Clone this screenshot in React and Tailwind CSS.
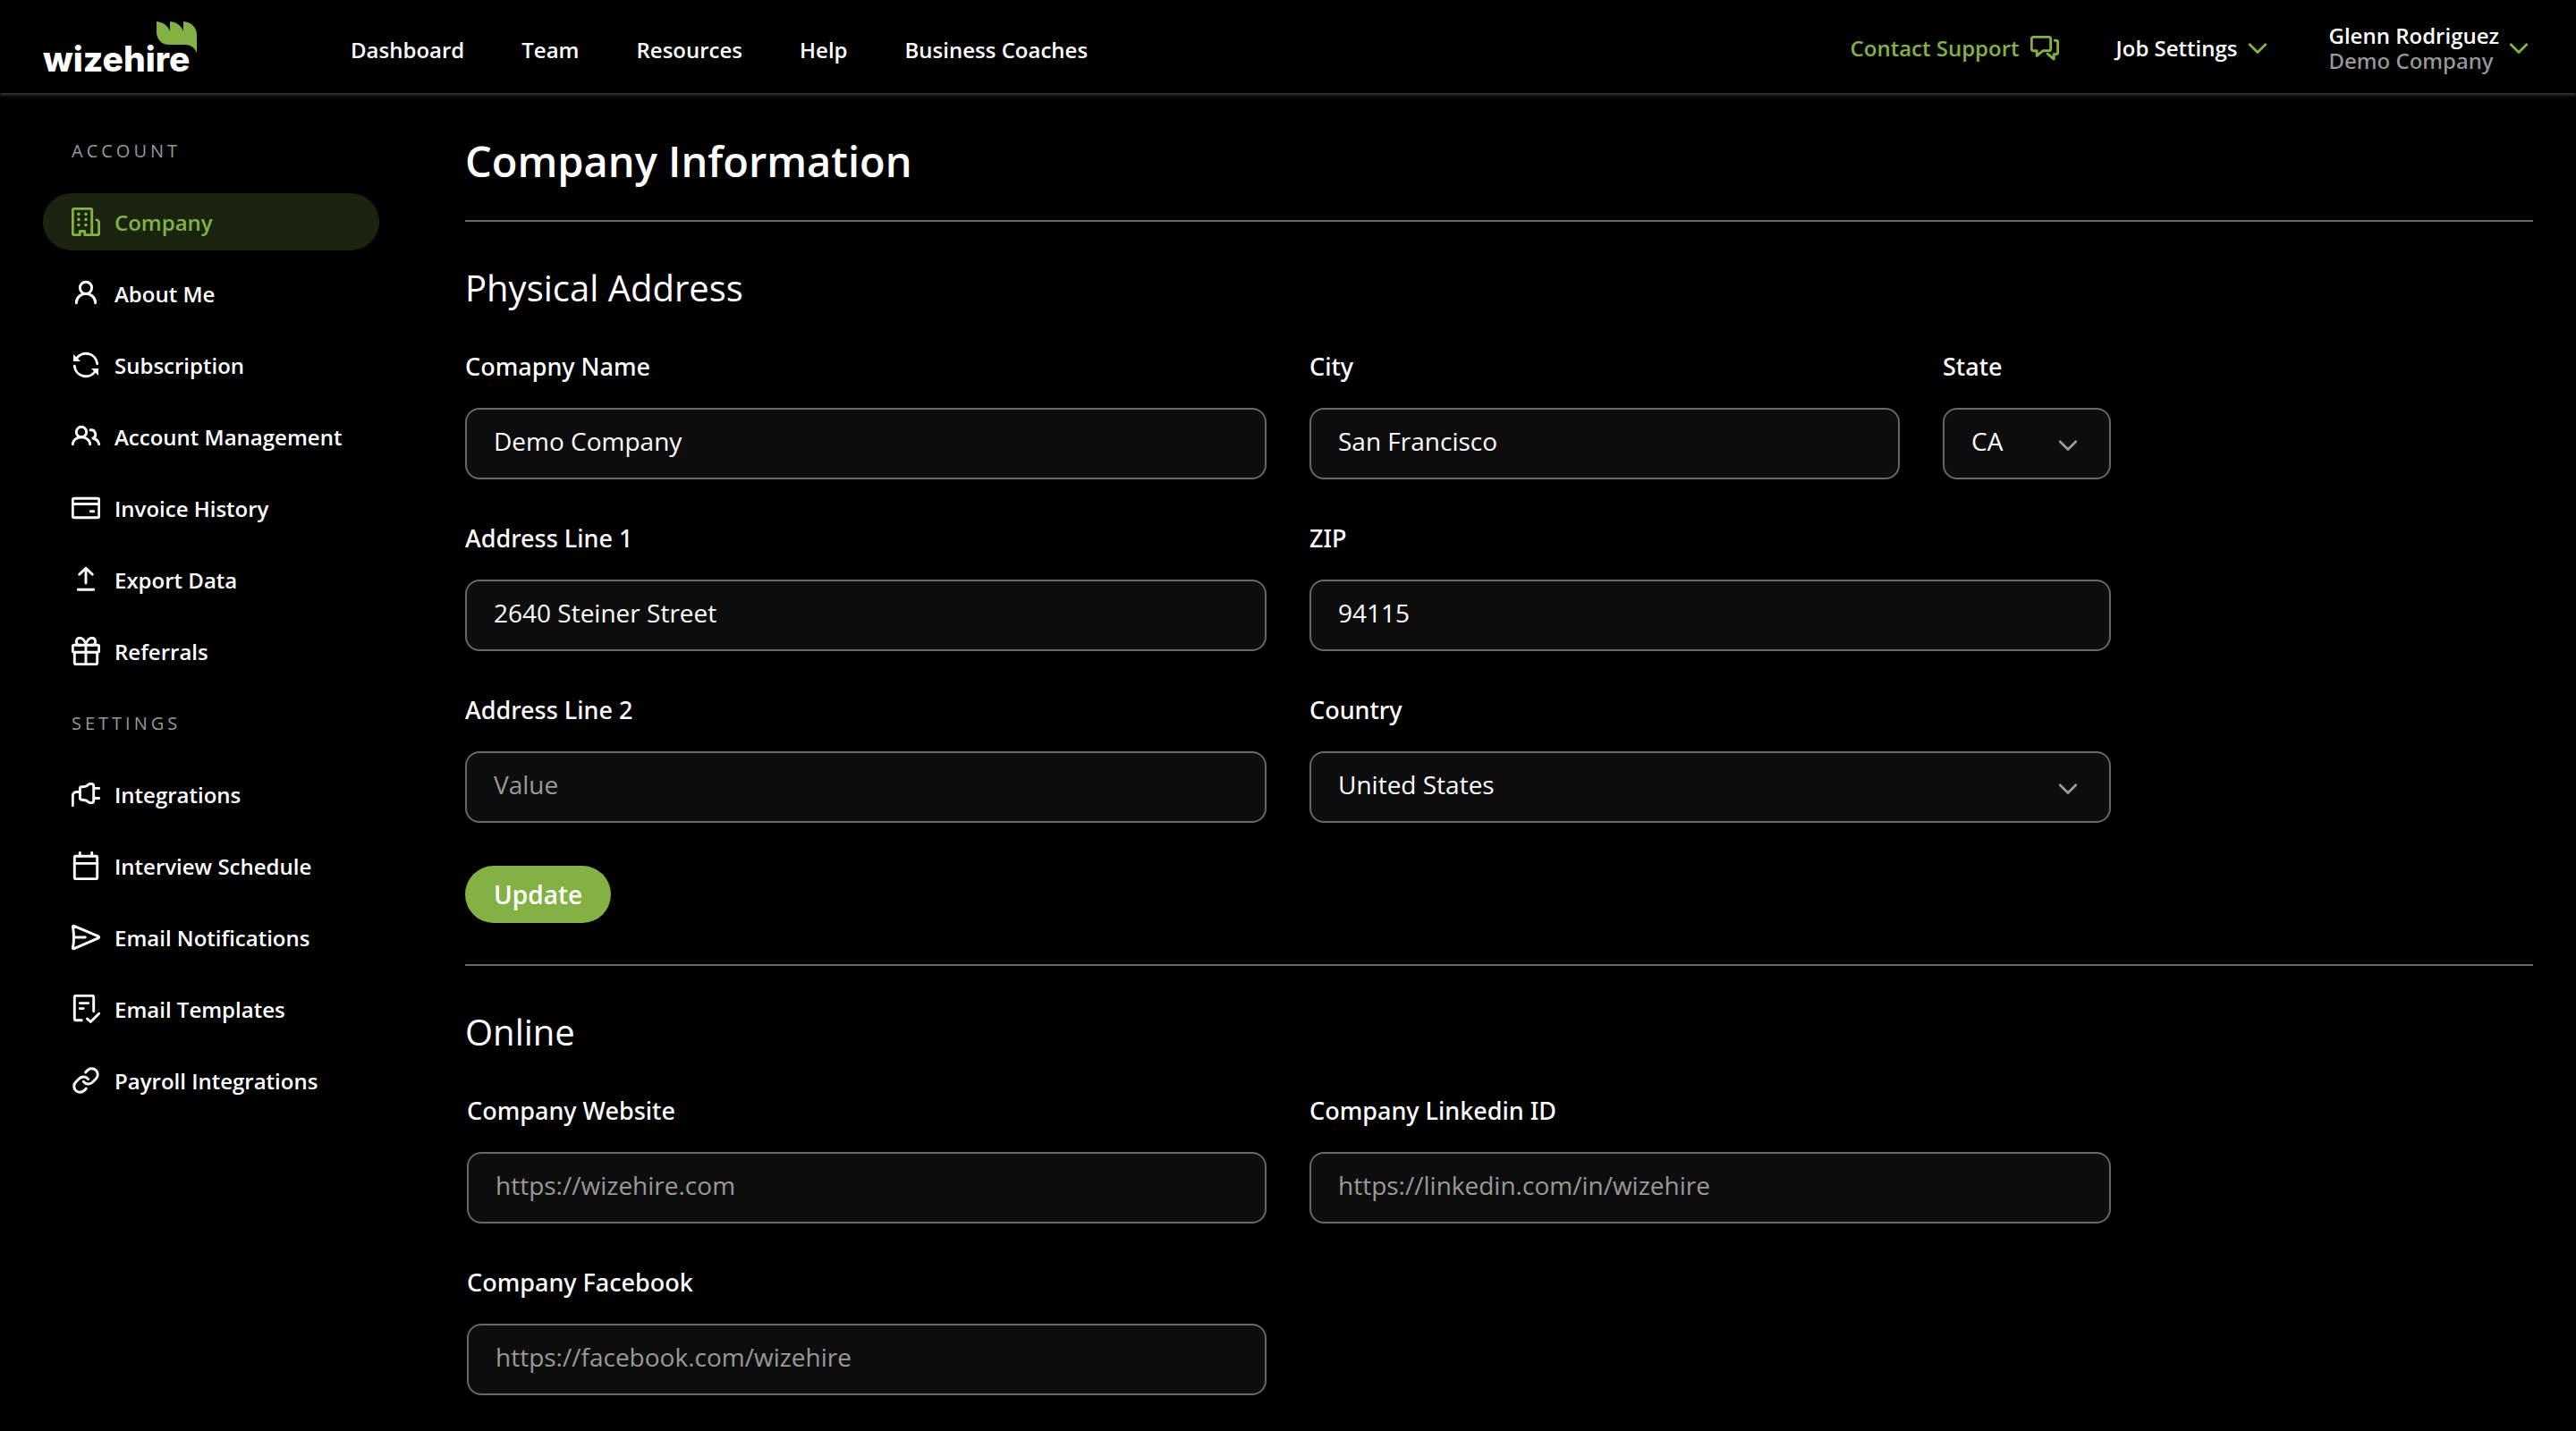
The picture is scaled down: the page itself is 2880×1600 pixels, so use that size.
import { useState } from "react";
import { Link } from "lucide-react";

function Icon({ children, className = "" }) {
  return (
    <svg
      viewBox="0 0 32 32"
      fill="none"
      stroke="currentColor"
      strokeWidth="2.9"
      strokeLinecap="round"
      strokeLinejoin="round"
      aria-hidden="true"
      className={`size-8 shrink-0 ${className}`}
    >
      {children}
    </svg>
  );
}

const BuildingIcon = () => (
  <Icon>
    <path d="M9.3 30.6H2.7a1.4 1.4 0 0 1-1.4-1.4V2.8a1.4 1.4 0 0 1 1.4-1.4h18.6a1.4 1.4 0 0 1 1.4 1.4v27.8h-8v-4.1H9.3z" />
    <path d="M22.7 30.6h6.6a1.4 1.4 0 0 0 1.4-1.4V17.2a3.4 3.4 0 0 0-2.8-3.3" />
    <g fill="currentColor" stroke="none">
      <circle cx="7.9" cy="7.4" r="1.8" />
      <circle cx="16" cy="7.4" r="1.8" />
      <circle cx="7.9" cy="13.4" r="1.8" />
      <circle cx="16" cy="13.4" r="1.8" />
      <circle cx="7.9" cy="19.5" r="1.8" />
      <circle cx="16" cy="19.5" r="1.8" />
    </g>
  </Icon>
);

const UserIcon = () => (
  <Icon>
    <circle cx="16" cy="9.8" r="6.6" />
    <path d="M5.3 26.7a10.7 10.3 0 0 1 21.4 0" />
  </Icon>
);

const SyncIcon = () => (
  <Icon>
    <path d="M28.7 14.7A12.7 12.7 0 0 0 5.6 8.8" />
    <path d="M3.3 17.3a12.7 12.7 0 0 0 23.1 5.9" />
    <path d="M2 4v8h8zM30 28v-8h-8z" fill="currentColor" stroke="none" />
  </Icon>
);

const UsersIcon = () => (
  <Icon>
    <circle cx="11" cy="11" r="5.7" />
    <path d="M1.3 24.7a9.7 8 0 0 1 19.4 0" />
    <path d="M21 8.8a4.9 4.9 0 0 1 3 9.2q5.6 1.4 6.7 6.7" />
  </Icon>
);

const CardIcon = () => (
  <Icon>
    <rect x="1.3" y="5.3" width="29.4" height="21.4" rx="1.5" />
    <path d="M1.3 11.5h29.4M21.3 19.7h3.4" />
  </Icon>
);

const ExportIcon = () => (
  <Icon>
    <path d="M16 20V3.5M8.7 10.3L16 3.3l7.3 7M7.3 27.3h17.4" />
  </Icon>
);

const GiftIcon = () => (
  <Icon>
    <rect x="1.3" y="9.3" width="29.4" height="8" rx="1.4" />
    <path d="M3.3 17.3v12a1.4 1.4 0 0 0 1.4 1.4h22.6a1.4 1.4 0 0 0 1.4-1.4v-12M16 9.3v21.4" />
    <path d="M16 9.3c-.8-4.5-3.4-8-6.7-8-5.3 0-5.3 8 0 8M16 9.3c.8-4.5 3.4-8 6.7-8 5.3 0 5.3 8 0 8" />
  </Icon>
);

const PlugIcon = () => (
  <Icon>
    <path d="M1.3 28.7V17.5a4 4 0 0 1 4-4h3.4" />
    <path d="M9.4 9.7q0-1.7 1.7-1.9c3.6-.3 5.3-.4 6.5-1.6l1-.9q1-.9 2.4-.9h1.300q2.400 0 2.400 2.300v16.600q0 2.300-2.400 2.300H21q-1.400 0-2.400-.9l-1-.9c-1.200-1.200-2.900-1.300-6.500-1.600q-1.700-.2-1.700-1.900z" />
    <path d="M25.3 9.4h5.4M25.3 20.5h5.4" />
  </Icon>
);

const CalendarIcon = () => (
  <Icon>
    <rect x="3.3" y="5.3" width="25.4" height="25.4" rx="1.4" />
    <path d="M3.3 13.4h25.4M9.3 1.3v4M22.7 1.3v4" />
  </Icon>
);

const SendIcon = () => (
  <Icon>
    <path d="M1.5 4.4q-.2-1.5 1.3-1L30 14.9q1.4.9 0 1.9L2.8 28.6q-1.5.5-1.3-1 2-11.600 0-23.200zM3.300 16h12" />
  </Icon>
);

const TemplateIcon = () => (
  <Icon>
    <path d="M11.3 28.7H4.7a1.4 1.4 0 0 1-1.4-1.4V2.7a1.4 1.4 0 0 1 1.4-1.4h18.6a1.4 1.4 0 0 1 1.4 1.4v16" />
    <path d="M9.3 9.6h9.4M9.3 15.6h4M17.5 27l3.8 3.5 9.4-9.3" />
  </Icon>
);

const LinkIcon = () => <Link className="size-8 shrink-0" strokeWidth={2.2} aria-hidden="true" />;

const ChatIcon = () => (
  <Icon>
    <path d="M3.3 3.4h17.4a2 2 0 0 1 2 2v11.3a2 2 0 0 1-2 2h-6.5l-7 5.7v-5.7H3.3a2 2 0 0 1-2-2V5.4a2 2 0 0 1 2-2z" />
    <path d="M27.3 7.3h1.4a2 2 0 0 1 2 2v11.3a2 2 0 0 1-2 2h-2.4V28l-7-5.6" />
  </Icon>
);

const ChevronIcon = ({ className }) => (
  <Icon className={className}>
    <path d="M7.2 11.7L16 20.5l8.800-8.800" />
  </Icon>
);

function Logo() {
  return (
    <a href="#home" aria-label="wizehire" className="relative flex h-full w-44 shrink-0 items-center">
      <span className="pt-6 font-['Inter'] text-[39px] leading-[48px] font-extrabold text-white">wizehire</span>
      <svg viewBox="0 0 45 36" aria-hidden="true" className="absolute top-5 left-[127px] h-9 w-[45px]">
        <path
          d="M0 0c8 .5 13 5.500 15 11V0c8 .5 13 5.500 15 11V0c9 .5 15 7 15 15v20.500C43 29.500 38.500 26 32 26H14C6 26 0 20 0 12z"
          fill="#84b144"
        />
      </svg>
    </a>
  );
}

const NAV = ["Dashboard", "Team", "Resources", "Help", "Business Coaches"];

const ACCOUNT = [
  ["Company", BuildingIcon],
  ["About Me", UserIcon],
  ["Subscription", SyncIcon],
  ["Account Management", UsersIcon],
  ["Invoice History", CardIcon],
  ["Export Data", ExportIcon],
  ["Referrals", GiftIcon],
];

const SETTINGS = [
  ["Integrations", PlugIcon],
  ["Interview Schedule", CalendarIcon],
  ["Email Notifications", SendIcon],
  ["Email Templates", TemplateIcon],
  ["Payroll Integrations", LinkIcon],
];

function Header() {
  return (
    <header className="flex h-[104px] items-center bg-black px-12 pt-1 text-[24px] leading-7 font-semibold shadow-[0_2px_4px_rgba(255,255,255,0.25)]">
      <Logo />
      <nav aria-label="Main" className="ml-[168px] flex gap-16 pt-1">
        {NAV.map((label) => (
          <a key={label} href="#nav">{label}</a>
        ))}
      </nav>
      <div className="ml-auto flex items-center gap-16">
        <a href="#support" className="flex items-center gap-3 text-[#84b144]">
          Contact Support
          <ChatIcon />
        </a>
        <button type="button" className="flex items-center gap-1.5">
          Job Settings
          <ChevronIcon className="text-[#84b144]" />
        </button>
        <button type="button" className="flex items-center gap-1.5 text-left">
          <span className="flex flex-col">
            <span>Glenn Rodriguez</span>
            <span className="font-['Noto_Sans'] font-medium text-[#999999]">Demo Company</span>
          </span>
          <ChevronIcon className="text-[#84b144]" />
        </button>
      </div>
    </header>
  );
}

function MenuGroup({ title, items, active, onSelect }) {
  return (
    <>
      <h2 className="flex h-16 items-center px-8 pt-0.5 text-[20px] leading-7 tracking-[4px] text-[#999999] uppercase">{title}</h2>
      {items.map(([label, Glyph]) => (
        <a
          key={label}
          href="#section"
          onClick={() => onSelect(label)}
          aria-current={active === label ? "page" : undefined}
          className={`flex h-16 items-center gap-4 rounded-full px-8 text-[24px] leading-8 font-semibold ${
            active === label ? "bg-[#1a230e] text-[#84b144]" : "text-white"
          }`}
        >
          <Glyph />
          <span className="pt-0.5">{label}</span>
        </a>
      ))}
    </>
  );
}

const CONTROL =
  "h-20 w-full rounded-2xl border-2 border-[#666666] bg-[#0d0d0d] px-[30px] pb-1.5 text-[28px] text-white outline-none placeholder:text-[#999999] focus:border-[#84b144]";

function Field({ id, label, className = "", children }) {
  return (
    <div className={`flex flex-col gap-7 ${className}`}>
      <label htmlFor={id} className="font-['Noto_Sans'] text-[27px] leading-9 font-medium">{label}</label>
      {children}
    </div>
  );
}

function TextField({ id, label, className, ...rest }) {
  return (
    <Field id={id} label={label} className={className}>
      <input id={id} type="text" className={CONTROL} {...rest} />
    </Field>
  );
}

function SelectField({ id, label, className, options }) {
  return (
    <Field id={id} label={label} className={className}>
      <div className="relative">
        <select id={id} className={`${CONTROL} appearance-none`}>
          {options.map((option) => (
            <option key={option}>{option}</option>
          ))}
        </select>
        <ChevronIcon className="pointer-events-none absolute top-[26px] right-8 text-[#999999]" />
      </div>
    </Field>
  );
}

export default function App() {
  const [active, setActive] = useState("Company");

  return (
    <div className="min-h-screen bg-black font-['Open_Sans','Noto_Sans',sans-serif] text-white">
      <Header />
      <div className="flex gap-24 px-12 pb-10">
        <aside className="flex w-[376px] shrink-0 flex-col gap-4 pt-8">
          <MenuGroup title="Account" items={ACCOUNT} active={active} onSelect={setActive} />
          <MenuGroup title="Settings" items={SETTINGS} active={active} onSelect={setActive} />
        </aside>

        <main className="min-w-0 flex-1 pt-12">
          <h1 className="border-b-2 border-[#666666] pb-[38px] text-[47px] leading-[56px] font-semibold">Company Information</h1>

          <form className="flex flex-col border-b-2 border-[#666666] pt-12 pb-[46px]" onSubmit={(e) => e.preventDefault()}>
            <h2 className="text-[40px] leading-[52px]">Physical Address</h2>
            <div className="mt-11 grid w-full max-w-[1840px] grid-cols-2 gap-12">
              <TextField id="company-name" label="Comapny Name" defaultValue="Demo Company" />
              <div className="flex gap-12">
                <TextField id="city" label="City" className="min-w-0 flex-1" defaultValue="San Francisco" />
                <SelectField id="state" label="State" className="w-[188px]" options={["CA", "NY", "TX"]} />
              </div>
              <TextField id="address-1" label="Address Line 1" defaultValue="2640 Steiner Street" />
              <TextField id="zip" label="ZIP" defaultValue="94115" />
              <TextField id="address-2" label="Address Line 2" placeholder="Value" />
              <SelectField id="country" label="Country" options={["United States", "Canada"]} />
            </div>
            <button type="submit" className="mt-12 h-16 self-start rounded-full bg-[#84b144] px-8 text-[28px] leading-8 font-semibold">
              Update
            </button>
          </form>

          <section className="pt-12">
            <h2 className="text-[40px] leading-[52px]">Online</h2>
            <div className="mt-11 grid w-full max-w-[1840px] grid-cols-2 gap-12">
              <TextField id="website" label="Company Website" className="pl-0.5" placeholder="https://wizehire.com" />
              <TextField id="linkedin" label="Company Linkedin ID" placeholder="https://linkedin.com/in/wizehire" />
              <TextField id="facebook" label="Company Facebook" className="pl-0.5" placeholder="https://facebook.com/wizehire" />
            </div>
          </section>
        </main>
      </div>
    </div>
  );
}
